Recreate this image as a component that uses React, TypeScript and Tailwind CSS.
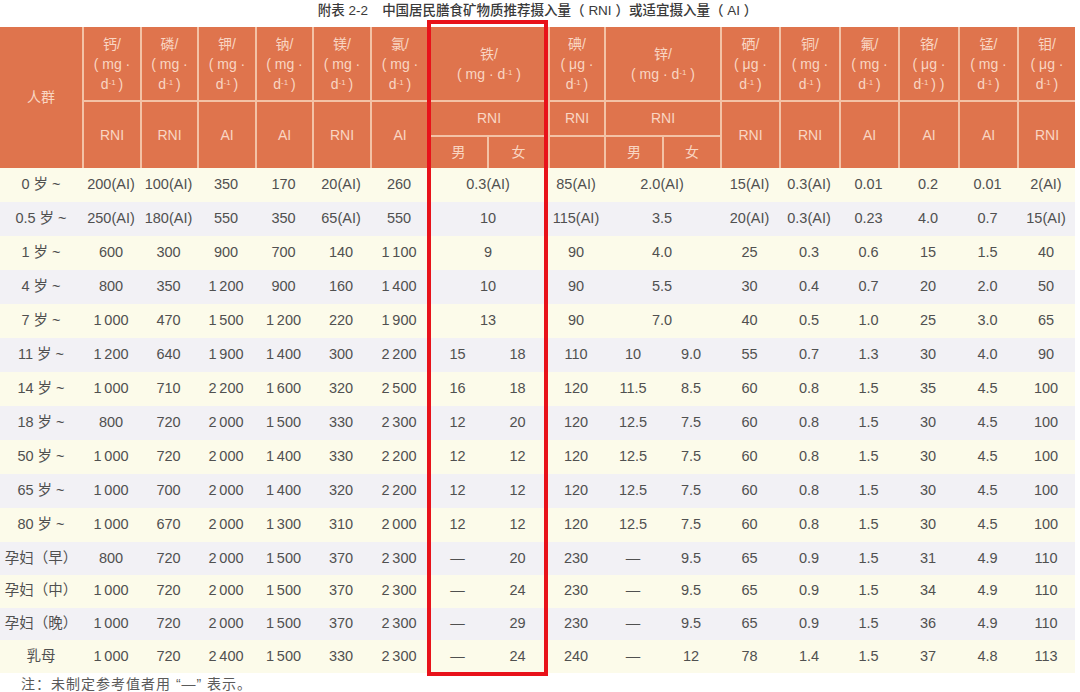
import React from 'react';

type Row = {
  label: string;
  a: string[];
  fe: string[];
  i: string;
  zn: string[];
  b: string[];
};

const t = (s: string) => s.replace(' ', '\u2009');

const rows: Row[] = [
  { label: '0 岁 ~', a: ['200(AI)', '100(AI)', '350', '170', '20(AI)', '260'], fe: ['0.3(AI)'], i: '85(AI)', zn: ['2.0(AI)'], b: ['15(AI)', '0.3(AI)', '0.01', '0.2', '0.01', '2(AI)'] },
  { label: '0.5 岁 ~', a: ['250(AI)', '180(AI)', '550', '350', '65(AI)', '550'], fe: ['10'], i: '115(AI)', zn: ['3.5'], b: ['20(AI)', '0.3(AI)', '0.23', '4.0', '0.7', '15(AI)'] },
  { label: '1 岁 ~', a: ['600', '300', '900', '700', '140', '1 100'], fe: ['9'], i: '90', zn: ['4.0'], b: ['25', '0.3', '0.6', '15', '1.5', '40'] },
  { label: '4 岁 ~', a: ['800', '350', '1 200', '900', '160', '1 400'], fe: ['10'], i: '90', zn: ['5.5'], b: ['30', '0.4', '0.7', '20', '2.0', '50'] },
  { label: '7 岁 ~', a: ['1 000', '470', '1 500', '1 200', '220', '1 900'], fe: ['13'], i: '90', zn: ['7.0'], b: ['40', '0.5', '1.0', '25', '3.0', '65'] },
  { label: '11 岁 ~', a: ['1 200', '640', '1 900', '1 400', '300', '2 200'], fe: ['15', '18'], i: '110', zn: ['10', '9.0'], b: ['55', '0.7', '1.3', '30', '4.0', '90'] },
  { label: '14 岁 ~', a: ['1 000', '710', '2 200', '1 600', '320', '2 500'], fe: ['16', '18'], i: '120', zn: ['11.5', '8.5'], b: ['60', '0.8', '1.5', '35', '4.5', '100'] },
  { label: '18 岁 ~', a: ['800', '720', '2 000', '1 500', '330', '2 300'], fe: ['12', '20'], i: '120', zn: ['12.5', '7.5'], b: ['60', '0.8', '1.5', '30', '4.5', '100'] },
  { label: '50 岁 ~', a: ['1 000', '720', '2 000', '1 400', '330', '2 200'], fe: ['12', '12'], i: '120', zn: ['12.5', '7.5'], b: ['60', '0.8', '1.5', '30', '4.5', '100'] },
  { label: '65 岁 ~', a: ['1 000', '700', '2 000', '1 400', '320', '2 200'], fe: ['12', '12'], i: '120', zn: ['12.5', '7.5'], b: ['60', '0.8', '1.5', '30', '4.5', '100'] },
  { label: '80 岁 ~', a: ['1 000', '670', '2 000', '1 300', '310', '2 000'], fe: ['12', '12'], i: '120', zn: ['12.5', '7.5'], b: ['60', '0.8', '1.5', '30', '4.5', '100'] },
  { label: '孕妇（早）', a: ['800', '720', '2 000', '1 500', '370', '2 300'], fe: ['—', '20'], i: '230', zn: ['—', '9.5'], b: ['65', '0.9', '1.5', '31', '4.9', '110'] },
  { label: '孕妇（中）', a: ['1 000', '720', '2 000', '1 500', '370', '2 300'], fe: ['—', '24'], i: '230', zn: ['—', '9.5'], b: ['65', '0.9', '1.5', '34', '4.9', '110'] },
  { label: '孕妇（晚）', a: ['1 000', '720', '2 000', '1 500', '370', '2 300'], fe: ['—', '29'], i: '230', zn: ['—', '9.5'], b: ['65', '0.9', '1.5', '36', '4.9', '110'] },
  { label: '乳母', a: ['1 000', '720', '2 400', '1 500', '330', '2 300'], fe: ['—', '24'], i: '240', zn: ['—', '12'], b: ['78', '1.4', '1.5', '37', '4.8', '113'] },
];

const leftHeads = [
  { name: '钙', unit: 'mg', kind: 'RNI' },
  { name: '磷', unit: 'mg', kind: 'RNI' },
  { name: '钾', unit: 'mg', kind: 'AI' },
  { name: '钠', unit: 'mg', kind: 'AI' },
  { name: '镁', unit: 'mg', kind: 'RNI' },
  { name: '氯', unit: 'mg', kind: 'AI' },
];

const rightHeads = [
  { name: '硒', unit: 'μg', kind: 'RNI' },
  { name: '铜', unit: 'mg', kind: 'RNI' },
  { name: '氟', unit: 'mg', kind: 'AI' },
  { name: '铬', unit: 'μg', kind: 'AI', extra: true },
  { name: '锰', unit: 'mg', kind: 'AI' },
  { name: '钼', unit: 'μg', kind: 'RNI' },
];

const cell = 'bg-[#df744d] flex items-center justify-center text-center';

function Narrow({ name, unit, extra }: { name: string; unit: string; extra?: boolean }) {
  return (
    <div className={`${cell} flex-col leading-[20px]`}>
      <span>{name}/</span>
      <span className="whitespace-nowrap">( {unit} ·</span>
      <span className="whitespace-nowrap">
        d<sup className="text-[8px]">-1</sup>&thinsp;){extra ? ' )' : ''}
      </span>
    </div>
  );
}

function Wide({ name }: { name: string }) {
  return (
    <div className={`${cell} col-span-2 flex-col leading-[20px]`}>
      <span>{name}/</span>
      <span className="whitespace-nowrap">
        ( mg · d<sup className="text-[8px]">-1</sup> )
      </span>
    </div>
  );
}

export default function App() {
  return (
    <div
      className="relative w-[1080px] h-[692px] bg-white overflow-hidden"
      style={{ fontFamily: '"Liberation Sans", "Noto Sans CJK SC", sans-serif' }}
    >
      {/* Title */}
      <div className="w-[1075px] h-[27px] flex items-start justify-center pt-[1px] text-[13.5px] font-medium text-[#3a3a3a]">
        <span>附表 2-2</span>
        <span className="ml-[14px]">中国居民膳食矿物质推荐摄入量（ RNI ）或适宜摄入量（ AI ）</span>
      </div>

      {/* Header */}
      <div className="w-[1075px] grid grid-cols-[82px_56px_55px_56px_55px_56px_56px_57px_59px_54px_56px_56px_57px_58px_57px_58px_57px_56px] grid-rows-[73px_33px_31px] gap-[2px] bg-[#f3c2a6] text-[14px] text-[#f9d6c3]">
        <div className={`${cell} row-span-3`}>人群</div>
        {leftHeads.map((h) => (
          <Narrow key={h.name} name={h.name} unit={h.unit} />
        ))}
        <Wide name="铁" />
        <Narrow name="碘" unit="μg" />
        <Wide name="锌" />
        {rightHeads.map((h) => (
          <Narrow key={h.name} name={h.name} unit={h.unit} extra={h.extra} />
        ))}

        {leftHeads.map((h) => (
          <div key={h.name + 'k'} className={`${cell} row-span-2`}>
            {h.kind}
          </div>
        ))}
        <div className={`${cell} col-span-2`}>RNI</div>
        <div className={cell}>RNI</div>
        <div className={`${cell} col-span-2`}>RNI</div>
        {rightHeads.map((h) => (
          <div key={h.name + 'k'} className={`${cell} row-span-2`}>
            {h.kind}
          </div>
        ))}

        <div className={cell}>男</div>
        <div className={cell}>女</div>
        <div className={cell}></div>
        <div className={cell}>男</div>
        <div className={cell}>女</div>
      </div>

      {/* Body */}
      <div className="w-[1075px] text-[14.5px] text-[#505050]">
        {rows.map((r, idx) => (
          <div
            key={r.label}
            className={`grid grid-cols-[82px_58px_57px_58px_57px_58px_58px_59px_61px_56px_58px_58px_59px_60px_59px_60px_59px_58px] items-center text-center ${
              idx < 11 ? 'h-[34px]' : 'h-[32.75px]'
            } ${idx % 2 === 0 ? 'bg-[#fcfbea]' : 'bg-[#f2f1f5]'}`}
          >
            <span className="whitespace-nowrap">{r.label}</span>
            {r.a.map((v, k) => (
              <span key={k} className="whitespace-nowrap">{t(v)}</span>
            ))}
            {r.fe.length === 1 ? (
              <span className="col-span-2">{r.fe[0]}</span>
            ) : (
              r.fe.map((v, k) => <span key={k}>{v}</span>)
            )}
            <span className="whitespace-nowrap">{r.i}</span>
            {r.zn.length === 1 ? (
              <span className="col-span-2">{r.zn[0]}</span>
            ) : (
              r.zn.map((v, k) => <span key={k}>{v}</span>)
            )}
            {r.b.map((v, k) => (
              <span key={k} className="whitespace-nowrap">{v}</span>
            ))}
          </div>
        ))}
      </div>

      {/* Footnote */}
      <div className="pl-[21px] pt-[1px] text-[14px] tracking-[1px] text-[#5a5a5a] leading-[20px]">
        注：未制定参考值者用 “—” 表示。
      </div>

      {/* Highlight box */}
      <div className="absolute left-[427px] top-[20px] w-[121px] h-[656px] border-4 border-[#e8121a]" />
    </div>
  );
}
